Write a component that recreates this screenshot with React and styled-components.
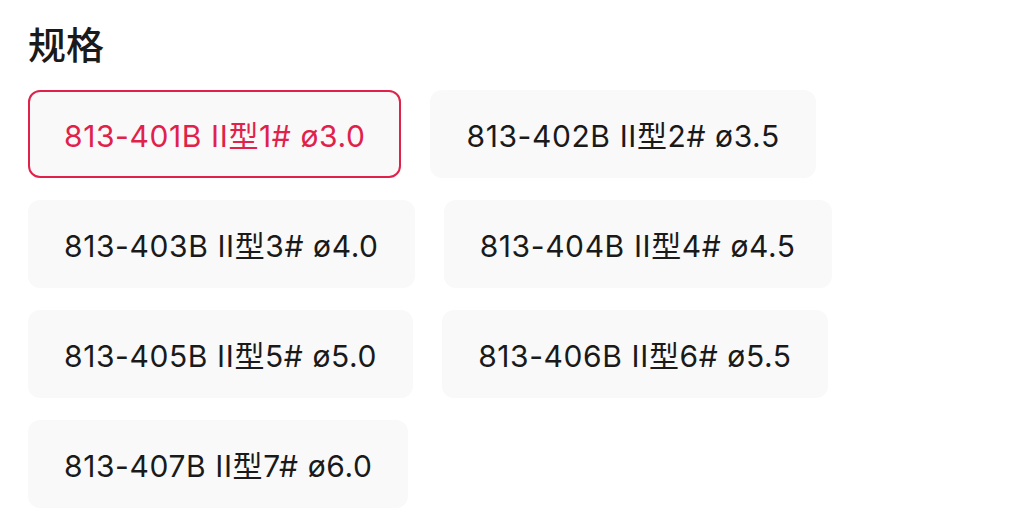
import React, { useState } from "react";
import styled, { createGlobalStyle } from "styled-components";

const GlobalStyle = createGlobalStyle`
  html, body {
    margin: 0;
    padding: 0;
    background: #fff;
  }
  body {
    font-family: Inter, "Noto Sans CJK SC", sans-serif;
    color: #1a1a1a;
  }
`;

const Wrapper = styled.div`
  padding: 20px 28px 0;
  width: 1031px;
  height: 523px;
  box-sizing: border-box;
  overflow: hidden;
`;

const Title = styled.div`
  font-size: 38px;
  font-weight: 500;
  line-height: 50px;
  margin-bottom: 20px;
  color: #1a1a1a;
`;

const Options = styled.div`
  display: flex;
  flex-wrap: wrap;
  column-gap: 29px;
  row-gap: 22px;
  width: 880px;
`;

const Chip = styled.button`
  height: 88px;
  padding: 0 34px;
  box-sizing: border-box;
  border-radius: 12px;
  border: 2px solid ${(p) => (p.$active ? "#e0224b" : "transparent")};
  background: #f9f9f9;
  color: ${(p) => (p.$active ? "#e0224b" : "#1a1a1a")};
  font-family: Inter, "Noto Sans CJK SC", sans-serif;
  font-size: 30px;
  letter-spacing: 0.6px;
  font-weight: 400;
  white-space: nowrap;
  cursor: pointer;
`;

const specs = [
  "813-401B II型1# ø3.0",
  "813-402B II型2# ø3.5",
  "813-403B II型3# ø4.0",
  "813-404B II型4# ø4.5",
  "813-405B II型5# ø5.0",
  "813-406B II型6# ø5.5",
  "813-407B II型7# ø6.0",
];

const App = () => {
  const [selected, setSelected] = useState(0);

  return (
    <Wrapper>
      <GlobalStyle />
      <Title>规格</Title>
      <Options>
        {specs.map((s, i) => (
          <Chip key={s} $active={selected === i} onClick={() => setSelected(i)}>
            {s}
          </Chip>
        ))}
      </Options>
    </Wrapper>
  );
};

export default App;
